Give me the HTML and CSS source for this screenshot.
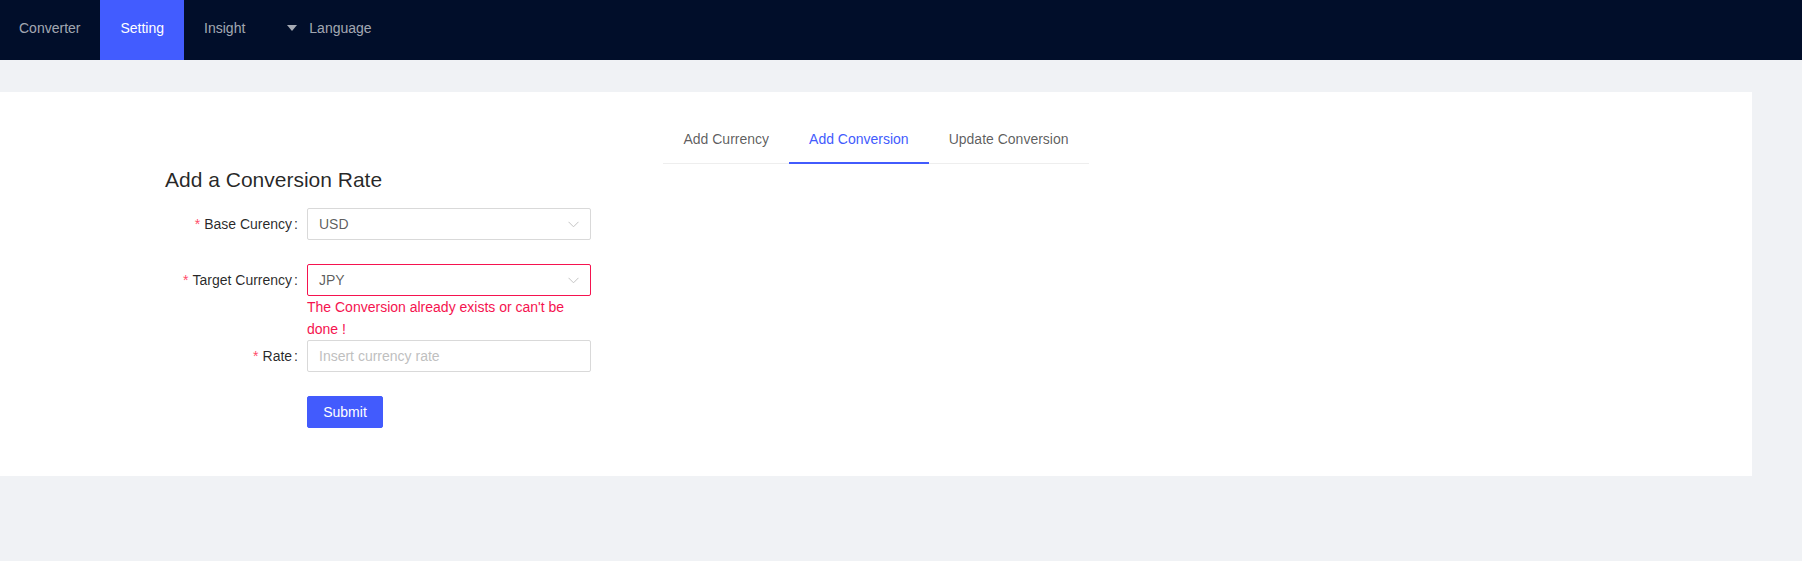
FILE: index.html
```html
<!DOCTYPE html>
<html lang="en">
<head>
<meta charset="utf-8">
<title>Setting - Add Conversion</title>
<link rel="stylesheet" href="styles.css">
</head>
<body>
<header class="header">
  <nav class="menu">
    <a class="menu-item first">Converter</a>
    <a class="menu-item active">Setting</a>
    <a class="menu-item">Insight</a>
    <a class="menu-item submenu"><span class="caret"></span><span>Language</span></a>
  </nav>
</header>
<main class="content">
  <section class="card">
    <div class="tabs">
      <div class="tab">Add Currency</div>
      <div class="tab active">Add Conversion</div>
      <div class="tab">Update Conversion</div>
    </div>
    <div class="form-wrap">
      <h3 class="title">Add a Conversion Rate</h3>
      <form class="form">
        <div class="row">
          <label class="label"><span class="req">*</span>Base Curency<span class="colon">:</span></label>
          <div class="control">
            <div class="select">
              <span class="value">USD</span>
              <svg class="arrow" width="11" height="7" viewBox="0 0 11 7"><path d="M0.5 0.8 L5.5 5.8 L10.5 0.8" fill="none" stroke="#c4c4c4" stroke-width="1"/></svg>
            </div>
          </div>
        </div>
        <div class="row has-error">
          <label class="label"><span class="req">*</span>Target Currency<span class="colon">:</span></label>
          <div class="control">
            <div class="select error">
              <span class="value">JPY</span>
              <svg class="arrow" width="11" height="7" viewBox="0 0 11 7"><path d="M0.5 0.8 L5.5 5.8 L10.5 0.8" fill="none" stroke="#c4c4c4" stroke-width="1"/></svg>
            </div>
            <div class="explain">The Conversion already exists or can't be done !</div>
          </div>
        </div>
        <div class="row">
          <label class="label"><span class="req">*</span>Rate<span class="colon">:</span></label>
          <div class="control">
            <input class="input" type="text" placeholder="Insert currency rate">
          </div>
        </div>
        <div class="row">
          <div class="label"></div>
          <div class="control">
            <button class="btn" type="button">Submit</button>
          </div>
        </div>
      </form>
    </div>
  </section>
</main>
</body>
</html>
```

FILE: styles.css
```css
* { box-sizing: border-box; }
html, body { margin: 0; padding: 0; }
body {
  background: #f0f2f5;
  font-family: "Liberation Sans", Arial, sans-serif;
  font-size: 14px;
  color: rgba(0,0,0,0.85);
  min-height: 561px;
}
.header {
  height: 60px;
  background: #010e2a;
}
.menu {
  display: flex;
  height: 60px;
}
.menu-item {
  display: flex;
  align-items: center;
  height: 60px;
  padding: 0 20px 5px;
  color: rgba(255,255,255,0.65);
  cursor: pointer;
}
.menu-item.first {
  padding-left: 19px;
}
.menu-item.active {
  background: #425cff;
  color: #fff;
}
.menu-item.submenu {
  padding-left: 22px;
}
.caret {
  display: inline-block;
  width: 0;
  height: 0;
  border-left: 5px solid transparent;
  border-right: 5px solid transparent;
  border-top: 6px solid rgba(255,255,255,0.65);
  margin-right: 12px;
  margin-top: 1px;
}
.content {
  padding-top: 32px;
  padding-right: 50px;
}
.card {
  background: #fff;
  padding: 24px 0 24px;
}
.tabs {
  display: flex;
  justify-content: center;
}
.tab {
  padding: 12px 20px 13px;
  line-height: 22px;
  color: rgba(0,0,0,0.65);
  border-bottom: 1px solid #eeeeee;
  position: relative;
  cursor: pointer;
}
.tab.active {
  color: #425bfd;
}
.tab.active::after {
  content: "";
  position: absolute;
  left: 0;
  right: 0;
  bottom: -1px;
  height: 2px;
  background: #425bfd;
}
.form-wrap {
  padding-left: 165px;
}
.title {
  margin: 2px 0 14px;
  font-size: 21px;
  line-height: 28px;
  font-weight: normal;
  color: rgba(0,0,0,0.85);
}
.form {
  display: flex;
  flex-direction: column;
}
.row {
  display: flex;
  margin-bottom: 24px;
}
.row.has-error { margin-bottom: 0; }
.label {
  width: 142px;
  flex: none;
  text-align: right;
  line-height: 32px;
  height: 32px;
  color: rgba(0,0,0,0.85);
  white-space: nowrap;
}
.req {
  color: #ff4d6a;
  margin-right: 4px;
  font-family: SimSun, "Liberation Sans", sans-serif;
}
.colon {
  margin: 0 9px 0 2px;
}
.control {
  width: 284px;
}
.select {
  height: 32px;
  border: 1px solid #d9d9d9;
  border-radius: 2px;
  display: flex;
  align-items: center;
  justify-content: space-between;
  padding: 0 11px 0 11px;
  color: rgba(0,0,0,0.65);
}
.select.error {
  border-color: #f5134f;
}
.arrow { display: block; margin-top: 1px; }
.explain {
  color: #f5134f;
  line-height: 22px;
}
.input {
  width: 100%;
  height: 32px;
  border: 1px solid #d9d9d9;
  border-radius: 2px;
  padding: 0 11px;
  font-family: inherit;
  font-size: 14px;
  color: rgba(0,0,0,0.65);
  outline: none;
}
.input::placeholder { color: #bfbfbf; }
.btn {
  height: 32px;
  width: 76px;
  background: #425bfd;
  border: 1px solid #425bfd;
  border-radius: 2px;
  color: #fff;
  font-family: inherit;
  font-size: 14px;
  padding: 0;
}
```
